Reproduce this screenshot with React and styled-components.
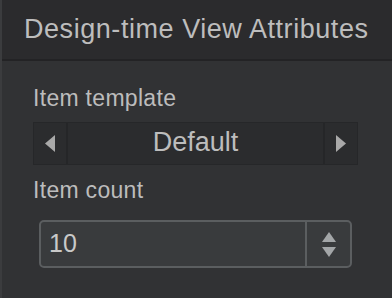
import styled, { createGlobalStyle } from 'styled-components';

const GlobalStyle = createGlobalStyle`
  html, body {
    margin: 0;
    padding: 0;
    background: #313234;
  }
  body {
    font-family: 'Liberation Sans', Arial, sans-serif;
  }
`;

const Panel = styled.div`
  display: flex;
  flex-direction: column;
  width: 392px;
  height: 298px;
  box-sizing: border-box;
  border-left: 2px solid #3b3c3e;
  background: #313234;
  overflow: hidden;
`;

const Header = styled.div`
  display: flex;
  align-items: center;
  height: 59px;
  padding-left: 22px;
  background: #2b2b2d;
  border-bottom: 2px solid #232325;
  color: #bdbdbd;
  font-size: 27px;
  letter-spacing: 0.55px;
  white-space: nowrap;
`;

const Body = styled.div`
  display: flex;
  flex-direction: column;
  padding: 23px 34px 0 31px;
`;

const Label = styled.div`
  color: #bcbcbc;
  font-size: 23px;
  line-height: 28px;
  letter-spacing: 0.3px;
  margin-bottom: ${props => props.gap}px;
`;

const Spinner = styled.div`
  display: flex;
  height: 43px;
  box-sizing: border-box;
  background: #2b2c2e;
  border: 1px solid #262729;
  margin-bottom: 11px;
`;

const ArrowCell = styled.div`
  display: flex;
  align-items: center;
  justify-content: center;
  width: 32px;
  border-${props => (props.side === 'left' ? 'right' : 'left')}: 2px solid #252628;
`;

const SpinnerValue = styled.div`
  flex: 1;
  display: flex;
  align-items: center;
  justify-content: center;
  color: #bdbdbd;
  font-size: 27px;
  padding-bottom: 2px;
`;

const NumberBox = styled.div`
  display: flex;
  width: 313px;
  height: 48px;
  margin-left: 6px;
  box-sizing: border-box;
  background: #393b3d;
  border: 2px solid #5b5e60;
  border-radius: 5px;
`;

const NumberValue = styled.div`
  flex: 1;
  display: flex;
  align-items: center;
  padding-left: 8px;
  color: #c9c9c9;
  font-size: 25px;
  padding-bottom: 2px;
`;

const Stepper = styled.div`
  display: flex;
  flex-direction: column;
  align-items: center;
  justify-content: center;
  gap: 5px;
  width: 43px;
  border-left: 2px solid #5b5e60;
`;

const Triangle = ({ dir }) => {
  const paths = {
    left: 'M10 0 L10 17 L0 8.5 Z',
    right: 'M0 0 L0 17 L10 8.5 Z',
  };
  return (
    <svg width="10" height="17" viewBox="0 0 10 17">
      <path d={paths[dir]} fill="#a9a9a9" />
    </svg>
  );
};

const StepArrow = ({ up }) => (
  <svg width="14" height="10" viewBox="0 0 14 10">
    <path d={up ? 'M0 10 L14 10 L7 0 Z' : 'M0 0 L14 0 L7 10 Z'} fill="#a3a6a8" />
  </svg>
);

const App = () => (
  <>
    <GlobalStyle />
    <Panel>
      <Header>Design-time View Attributes</Header>
      <Body>
        <Label gap={10}>Item template</Label>
        <Spinner>
          <ArrowCell side="left">
            <Triangle dir="left" />
          </ArrowCell>
          <SpinnerValue>Default</SpinnerValue>
          <ArrowCell side="right">
            <Triangle dir="right" />
          </ArrowCell>
        </Spinner>
        <Label gap={16}>Item count</Label>
        <NumberBox>
          <NumberValue>10</NumberValue>
          <Stepper>
            <StepArrow up />
            <StepArrow />
          </Stepper>
        </NumberBox>
      </Body>
    </Panel>
  </>
);

export default App;
